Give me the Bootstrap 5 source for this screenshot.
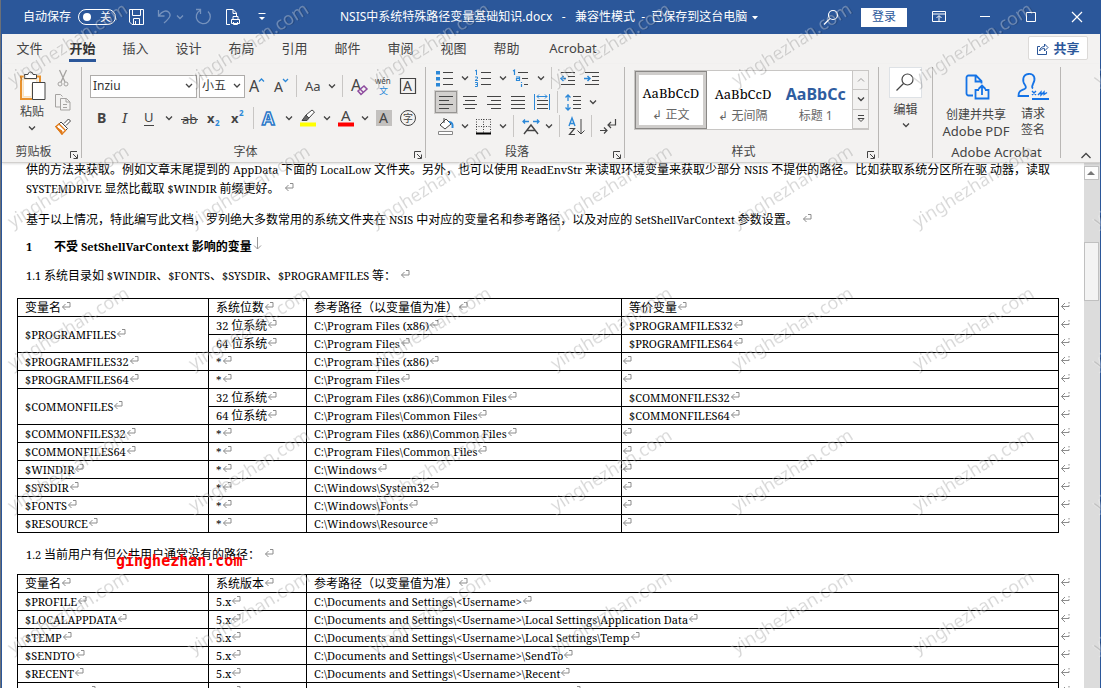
<!DOCTYPE html>
<html lang="zh-CN">
<head>
<meta charset="utf-8">
<meta name="viewport" content="width=device-width, initial-scale=1">
<title>NSIS中系统特殊路径变量基础知识.docx</title>
<link href="https://cdn.jsdelivr.net/npm/bootstrap@5.3.0/dist/css/bootstrap.min.css" rel="stylesheet">
<style>
:root{--word:#2b579a;--ink:#444;--chrome:#f3f2f1}
body{font:12px/16px "Noto Sans","Noto Sans CJK SC",sans-serif;color:var(--ink);background:#6b7078;height:100vh;overflow:hidden;padding-left:1px}
button{background:none;border:0;padding:0;color:inherit;font:inherit}
svg{flex:none;fill:none;stroke:var(--ink);display:block}
.window{height:100%;border-left:1px solid var(--word);border-right:1px solid var(--word);background:#fff}
.titlebar{height:34px;background:var(--word);color:#fff}
.titlebar svg{stroke:#fff}
.quick{width:338px;padding-left:21px}
.quick .dim{opacity:.35}
.quick .save{margin-right:12px}
.switchbox{width:38px;height:16px;border:1px solid #fff;border-radius:8px;margin:0 12px 0 7px;font-size:11px;line-height:14px;padding:0 4px;flex:none}
.dot{width:8px;height:8px;border-radius:50%;background:#fff}
.login{width:46px;height:19px;background:#fff;color:var(--word);margin:0 9px}
.capbtn{width:46px}
.tabs{height:30px;font-size:13px;padding-left:1px}
.tabs .tab{width:53px;color:var(--ink);text-decoration:none;text-align:center;line-height:20px;padding:4px 0 0}
.tabs .tab.wide{width:80px}
.tabs .tab.current span{font-weight:700;border-bottom:3px solid var(--word);display:inline-block;height:24px;color:#333}
.share{width:60px;height:24px;background:#fff;border:1px solid #dcdad8;border-radius:2px;color:var(--word);font-weight:700;margin:2px 12px 0 0}
.share svg{stroke:var(--word)}
.ribbon{height:99px;padding-top:3px;position:relative;border-bottom:1px solid #d2d0ce;box-shadow:0 1px 2px #0002;z-index:1}
.top{background:var(--chrome)}
.group{border-right:1px solid #b9b7b5;height:91px;flex:none}
.tools{height:78px;margin-top:-1px}
.caption{height:16px;line-height:16px;text-align:center;position:relative}
.launch{position:absolute;right:2px;bottom:0}
.rb{height:24px;display:flex;align-items:center;flex:none}
.rb svg text{stroke:none;fill:var(--ink);font-family:"Noto Sans","Noto Sans CJK SC",sans-serif}
.vr1{width:1px;height:22px;background:#c8c6c4;margin:0 4px 0 3px;flex:none}
.pressed{background:#d2d0ce;outline:1px solid #979593;outline-offset:-2px}
.form-select.pick{height:23px;border:1px solid #aeacaa;border-radius:0;padding:0 0 0 2px;font-size:12px;line-height:20px;color:#333;flex:none;background:#fff url("data:image/svg+xml,%3Csvg xmlns='http://www.w3.org/2000/svg' width='8' height='6'%3E%3Cpath d='M1 1l3 3 3-3' fill='none' stroke='%23444' stroke-width='1.3'/%3E%3C/svg%3E") no-repeat right 3px center}
.pick.face{width:107px;margin-right:2px}
.pick.points{width:46px}
.gallery{width:235px;height:60px;border:1px solid #c8c6c4;background:#fff;margin-left:9px}
.style{width:73px;height:58px;white-space:nowrap;color:#666}
.style b{display:block;font:13px/20px "Noto Serif",Cambria,"DejaVu Serif Condensed",serif;color:#000;margin:7px auto 4px}
.style.on{border:1px solid #8a8886;box-shadow:inset 0 0 0 3px #cfcdcb;width:72px}
.style.on b{margin-top:6px}
.style .h1s{font:700 16px/20px "Noto Sans",sans-serif;color:#2f5da0}
.steps{width:16px;border-left:1px solid #c8c6c4;background:var(--chrome)}
.steps button{height:20px;border-bottom:1px solid #c8c6c4;display:flex;align-items:center;justify-content:center}
.big{font-size:13px;text-align:center}
.big svg{stroke:#1473e6}
.page-area{overflow:hidden;color:#000;font:11px/19px "Noto Serif",Cambria,"DejaVu Serif Condensed","Noto Sans CJK SC",serif}
.cj{font-family:"Noto Sans CJK SC",sans-serif;font-size:12px;line-height:12px}
.para{margin:0 24px 13px;white-space:nowrap;font-size:11px;line-height:19px}
.para.first{margin-top:-3px;margin-bottom:12px}
.para.tight{margin-bottom:10px}
.mk{display:inline-block;width:10px;height:10px;vertical-align:1px;stroke:#8c8c8c}
.para .mk{margin-left:4px}
.grid-doc{width:calc(100% - 28px);margin:0 14px 0 15px;border-collapse:collapse;table-layout:fixed;line-height:16px}
.grid-doc th,.grid-doc td{border:1px solid #000;height:18px;padding:1px 0 0 7px;font-weight:400;white-space:nowrap}
.grid-doc td:empty,.grid-doc .void{padding-left:0}
.grid-doc .end{border:0;padding:0 0 0 1px}
.c1{width:191px}.c2{width:98px}.c3{width:315px}.c5{width:13px}
.stamp{position:absolute;left:90px;bottom:-6px;color:red;font:700 15px/18px "DejaVu Sans Mono",monospace}
.scroll{width:16px;background:#dcdcdc;padding-top:3px;flex:none}
.scroll .up{height:14px;width:15px;background:#fdfdfd;border:1px solid #c0c0c0;display:flex;align-items:center;justify-content:center}
.thumb{width:15px;height:59px;margin-top:62px;background:#f3f3f3;border:1px solid #c0c0c0}
.watermark{position:fixed;inset:0;width:100%;height:100%;pointer-events:none;z-index:5}
.watermark text{font:18px "Noto Sans",sans-serif;stroke:none}
</style>
</head>
<body>
<svg width="0" height="0" class="position-absolute" aria-hidden="true">
<symbol id="mk" viewBox="0 0 10 10"><path d="M6 1.500h3v4.500H1.500M4.500 3l-3 3 3 3"/></symbol>
<symbol id="em" viewBox="0 0 10 10"><path d="M9 1v1.500M9 4v1.500H1.500M5 2l-3.500 3.500L5 9"/></symbol>
<symbol id="cv" viewBox="0 0 14 24"><path d="M4 10.500l3 3 3-3" stroke-width="1.300"/></symbol>
<symbol id="la" viewBox="0 0 10 10"><path d="M1.500 8V1.500H8M4 4l4 4M8.500 4.500v4h-4"/></symbol>
</svg>
<div class="window d-flex flex-column">
<header class="top">
<div class="titlebar d-flex align-items-center">
 <div class="quick d-flex align-items-center">
  <span>自动保存</span>
  <button class="switchbox d-flex align-items-center justify-content-between" aria-label="自动保存"><span class="dot"></span><span>关</span></button>
  <button aria-label="保存" class="save"><svg width="17" height="18" viewBox="0 0 17 18"><path d="M1.500 1.500h14v15H4l-2.500-2.500zM4.500 1.500v6h8v-6M5.500 16.500v-6h6v6M7.500 13v3"/></svg></button>
  <button aria-label="撤消" class="dim d-flex align-items-center"><svg width="16" height="18" viewBox="0 0 16 18"><path d="M1.500 2v6h6M2 7.500C5 3 9 2 11.500 4c3 2.500 2 5.500-4.500 11" stroke-width="1.300"/></svg><svg width="14" height="24"><use href="#cv"/></svg></button>
  <button aria-label="重复" class="dim mx-2"><svg width="18" height="18" viewBox="0 0 18 18"><path d="M1 1.500h4.500V6M13 3.500a7 7 0 1 1-8-1" stroke-width="1.300"/></svg></button>
  <button aria-label="打印预览" class="ms-1"><svg width="16" height="18" viewBox="0 0 16 18"><path d="M5 16.500H1.500v-15H8l3.500 3.500v3M8 1.500v4h3.500M6.500 11.500h8v4h-8zM8 11V8.500h5V11M8.500 14v2.500h4V14"/></svg></button>
  <button aria-label="自定义" class="ms-3"><svg width="10" height="10" viewBox="0 0 10 10"><path d="M1.500 1.500h7"/><path d="M2 5h6L5 8z" fill="#fff" stroke="none"/></svg></button>
 </div>
 <div class="text-nowrap">NSIS中系统特殊路径变量基础知识.docx&nbsp; &nbsp;-&nbsp; &nbsp;兼容性模式 &nbsp;-&nbsp; 已保存到这台电脑 <svg class="d-inline-block" width="9" height="8" viewBox="0 0 9 8"><path d="M2 2h6L5 5.500z" fill="#fff" stroke="none"/></svg></div>
 <div class="ms-auto d-flex align-items-center">
  <button aria-label="搜索" class="me-2 pe-1"><svg width="18" height="18" viewBox="0 0 18 18"><circle cx="11" cy="7" r="4.500" stroke-width="1.200"/><path d="M8 10.500l-6 6" stroke-width="1.200"/></svg></button>
  <button class="login">登录</button>
  <button class="capbtn d-flex justify-content-center" aria-label="功能区显示选项"><svg width="14" height="12" viewBox="0 0 14 12"><path d="M.5.500h13v10H.5zM.5 3h13M7 10V5M4.500 7L7 4.500 9.500 7"/></svg></button>
  <button class="capbtn d-flex justify-content-center" aria-label="最小化"><svg width="12" height="12"><path d="M1 5.500h10"/></svg></button>
  <button class="capbtn d-flex justify-content-center" aria-label="最大化"><svg width="12" height="12"><path d="M1.500 1.500h9v9h-9z"/></svg></button>
  <button class="capbtn d-flex justify-content-center" aria-label="关闭"><svg width="12" height="12"><path d="M1 1l10 10M11 1L1 11" stroke-width="1.200"/></svg></button>
 </div>
</div>
<nav class="tabs d-flex">
 <a class="tab" href="#">文件</a><a class="tab current" href="#"><span>开始</span></a><a class="tab" href="#">插入</a><a class="tab" href="#">设计</a><a class="tab" href="#">布局</a><a class="tab" href="#">引用</a><a class="tab" href="#">邮件</a><a class="tab" href="#">审阅</a><a class="tab" href="#">视图</a><a class="tab" href="#">帮助</a><a class="tab wide" href="#">Acrobat</a>
 <button class="share ms-auto d-flex align-items-center justify-content-center gap-1"><svg width="13" height="13" viewBox="0 0 13 13"><path d="M4 4.500H1.500v8h9V9M3.500 9C4 6 6 4.500 8.500 4.500V2L12 5.500 8.500 9V6.500C6.500 6.500 5 7 3.500 9z"/></svg>共享</button>
</nav>
<div class="ribbon d-flex">
 <section class="group" style="width:80px">
  <div class="tools d-flex">
   <button class="ms-3 d-flex flex-column align-items-center align-self-start pt-1" style="width:28px"><svg width="28" height="34" viewBox="0 0 28 34"><path d="M3 6.500h4M17 6.500h5V14M3 5.500V29h11" stroke="#e8912d" stroke-width="2"/><path d="M4.500 8h15v6h-6v13.500h-9z" fill="#fbe3c0" stroke="none"/><path d="M6 10h12v4h-5v12H6z" fill="#fff" stroke="none"/><path d="M6.500 8.500v-4H10a2.500 2.500 0 0 1 5 0h3.500v4z" fill="#fff"/><path d="M14.500 12.500h12.500v17H14.500z" fill="#fff"/></svg><span class="text-nowrap">粘贴</span><svg width="14" height="15" viewBox="0 4 14 15"><use href="#cv" width="14" height="24"/></svg></button>
   <div class="ms-1">
    <button class="rb" aria-label="剪切"><svg width="24" height="24" viewBox="0 0 24 24" style="stroke:#a5a3a1"><path d="M9.500 4l5.500 12M16.500 4L11 16" stroke-width="1.300"/><circle cx="10" cy="18" r="2"/><circle cx="16" cy="18" r="2"/></svg></button>
    <button class="rb" aria-label="复制"><svg width="24" height="24" viewBox="0 0 24 24" style="stroke:#a5a3a1"><path d="M10 17H5.500V4.500h5l2 2M10.500 8.500h6l3.500 3.500v8h-9.500zM16 8.500V12h4M13 14.500h4M13 17.500h4"/></svg></button>
    <button class="rb" aria-label="格式刷"><svg width="24" height="24" viewBox="0 0 24 24"><path d="M14 9.500L18.500 5l2 2L16 11.500M11 8l6.500 6.500-2 2L9 10z" fill="#fff"/><path d="M9 10l6.500 6.500-3.500 3.500-6-7.500z" fill="#fff" stroke="#e07b1a" stroke-width="1.400"/><path d="M5.500 12.500L12 17v3.500z" fill="#e07b1a" stroke="#e07b1a"/></svg></button>
   </div>
  </div>
  <div class="caption pe-3">剪贴板<button class="launch" aria-label="剪贴板选项"><svg width="10" height="10"><use href="#la"/></svg></button></div>
 </section>

 <section class="group" style="width:344px">
  <div class="tools d-flex flex-column gap-2 ps-2 pt-2">
   <div class="d-flex align-items-center">
    <select class="form-select pick face" aria-label="字体"><option>Inziu</option></select>
    <select class="form-select pick points" aria-label="字号"><option>小五</option></select>
    <button class="rb" aria-label="增大字号"><svg width="24" height="24"><text x="4" y="18" font-size="16">A</text><path d="M14 7.500l2.500-2.500L19 7.500" stroke="#2b88d8" stroke-width="1.300"/></svg></button>
    <button class="rb" aria-label="减小字号"><svg width="24" height="24"><text x="5" y="18" font-size="14">A</text><path d="M14 5l2.500 2.500L19 5" stroke="#2b88d8" stroke-width="1.300"/></svg></button>
    <span class="vr1"></span>
    <button class="rb" aria-label="更改大小写"><svg width="24" height="24"><text x="4" y="17" font-size="13">Aa</text></svg><svg width="14" height="24"><use href="#cv"/></svg></button>
    <span class="vr1"></span>
    <button class="rb" aria-label="清除格式"><svg width="24" height="24"><text x="4" y="17" font-size="16">A</text><path d="M11 17l6-5 3 3-6 5.500zM13 15l3.500 3.500" stroke="#8e4b9e" stroke-width="1.500" fill="#f3f2f1"/></svg></button>
    <button class="rb" aria-label="拼音指南"><svg width="24" height="24"><text x="4" y="10" font-size="8">wén</text><text x="8" y="20" font-size="9" style="fill:#2b88d8">文</text></svg></button>
    <button class="rb" aria-label="字符边框"><svg width="24" height="24"><path d="M5.500 4.500h15v15h-15z" stroke-width="1.200"/><text x="8" y="17" font-size="14">A</text></svg></button>
   </div>
   <div class="d-flex align-items-center">
    <button class="rb" aria-label="加粗"><svg width="24" height="24"><text x="7" y="17" font-size="14" font-weight="700">B</text></svg></button>
    <button class="rb" aria-label="倾斜"><svg width="24" height="24"><text x="8" y="17" font-size="14" font-style="italic" style="font-family:'Noto Serif',serif">I</text></svg></button>
    <button class="rb" aria-label="下划线"><svg width="24" height="24"><text x="6" y="16" font-size="13">U</text><path d="M6 19.500h10"/></svg><svg width="14" height="24"><use href="#cv"/></svg></button>
    <button class="rb" aria-label="删除线"><svg width="26" height="24"><text x="6" y="18" font-size="13">ab</text><path d="M5 13.500h17"/></svg></button>
    <button class="rb" aria-label="下标"><svg width="24" height="24"><text x="5" y="17" font-size="13" font-weight="700">x</text><text x="13" y="20" font-size="8" font-weight="700" style="fill:#2b88d8">2</text></svg></button>
    <button class="rb" aria-label="上标"><svg width="24" height="24"><text x="5" y="17" font-size="13" font-weight="700">x</text><text x="13" y="10" font-size="8" font-weight="700" style="fill:#2b88d8">2</text></svg></button>
    <span class="vr1"></span>
    <button class="rb" aria-label="文本效果"><svg width="24" height="24"><text x="4" y="19" font-size="18" font-weight="700" style="fill:#fff;stroke:#2b78c8;stroke-width:1.500">A</text></svg><svg width="14" height="24"><use href="#cv"/></svg></button>
    <button class="rb" aria-label="突出显示"><svg width="24" height="24"><path d="M4 16.500h16v4H4z" fill="#ff0" stroke="none"/><path d="M10 9l6-5 2.500 2-5.500 6z" fill="#fff"/><path d="M10 9l3 3-2 2.500H6z" fill="#666"/></svg><svg width="14" height="24"><use href="#cv"/></svg></button>
    <button class="rb" aria-label="字体颜色"><svg width="24" height="24"><text x="7" y="15" font-size="15">A</text><path d="M4 16.500h16v4H4z" fill="red" stroke="none"/></svg><svg width="14" height="24"><use href="#cv"/></svg></button>
    <button class="rb" aria-label="字符底纹"><svg width="24" height="24"><path d="M4 4h16v16H4z" fill="#c3c1bf" stroke="none"/><text x="7" y="17" font-size="14">A</text></svg></button>
    <button class="rb" aria-label="带圈字符"><svg width="24" height="24"><circle cx="12" cy="12" r="7.500"/><text x="7" y="16" font-size="10">字</text></svg></button>
   </div>
  </div>
  <div class="caption pe-3">字体<button class="launch" aria-label="字体选项"><svg width="10" height="10"><use href="#la"/></svg></button></div>
 </section>

 <section class="group" style="width:199px">
  <div class="tools ps-2">
   <div class="d-flex align-items-center">
    <button class="rb" aria-label="项目符号"><svg width="24" height="24"><path d="M2 5h4v3.500H2zM2 11h4v3.500H2zM2 17h4v3.500H2z" fill="#2b88d8" stroke="none"/><path d="M9 6.500h10M9 12.500h10M9 18.500h10"/></svg><svg width="14" height="24"><use href="#cv"/></svg></button>
    <button class="rb" aria-label="编号"><svg width="24" height="24"><path d="M3 5l1.500-1v5M3 11h2.500v1.500L3 14.500h3M3 16.500h2.500v4H3M3.500 18.500h2" stroke="#2b88d8"/><path d="M9 6.500h10M9 12.500h10M9 18.500h10"/></svg><svg width="14" height="24"><use href="#cv"/></svg></button>
    <button class="rb" aria-label="多级列表"><svg width="24" height="24"><path d="M3 5l1.500-1v5M6 11h3.500v3.500H6.500v-2h3M11.500 16v1M11.500 18v3" stroke="#2b88d8" stroke-width="1.200"/><path d="M8 6.500h10M12 12.500h6M14 18.500h4"/></svg><svg width="14" height="24"><use href="#cv"/></svg></button>
    <span class="vr1"></span>
    <button class="rb" aria-label="减少缩进"><svg width="24" height="24"><path d="M5 6.500h14M12 10.500h7M12 14.500h7M5 18.500h14"/><path d="M10 12.500H5M7.500 10L5 12.500 7.500 15" stroke="#2b88d8" stroke-width="1.500"/></svg></button>
    <button class="rb" aria-label="增加缩进"><svg width="24" height="24"><path d="M5 6.500h14M12 10.500h7M12 14.500h7M5 18.500h14"/><path d="M4 12.500h6M7.500 10l2.500 2.500L7.500 15" stroke="#2b88d8" stroke-width="1.500"/></svg></button>
   </div>
   <div class="d-flex align-items-center">
    <button class="rb pressed" aria-label="左对齐"><svg width="24" height="24"><path d="M5 6.500h14M5 10.500h10M5 14.500h14M5 18.500h10"/></svg></button>
    <button class="rb" aria-label="居中"><svg width="24" height="24"><path d="M5 6.500h14M7 10.500h10M5 14.500h14M7 18.500h10"/></svg></button>
    <button class="rb" aria-label="右对齐"><svg width="24" height="24"><path d="M5 6.500h14M9 10.500h10M5 14.500h14M9 18.500h10"/></svg></button>
    <button class="rb" aria-label="两端对齐"><svg width="24" height="24"><path d="M5 6.500h14M5 10.500h14M5 14.500h14M5 18.500h14"/></svg></button>
    <button class="rb" aria-label="分散对齐"><svg width="24" height="24"><path d="M7 10.500h11M7 14.500h11M7 18.500h11"/><path d="M4.500 4v16M19.500 4v16M7 6.500h10M9 4.500l-2 2 2 2M15 4.500l2 2-2 2" stroke="#2b88d8"/></svg></button>
    <span class="vr1"></span>
    <button class="rb" aria-label="行距"><svg width="24" height="24"><path d="M11 6.500h8M11 10.500h8M11 14.500h8M11 18.500h8"/><path d="M6 5v6M3.500 7.500L6 5l2.500 2.500M6 14v6M3.500 17.500L6 20l2.500-2.500" stroke="#2b88d8" stroke-width="1.300"/></svg><svg width="14" height="24"><use href="#cv"/></svg></button>
   </div>
   <div class="d-flex align-items-center">
    <button class="rb" aria-label="底纹"><svg width="24" height="24"><path d="M6 11l6-6 5 5-6 5zM10 4v5" fill="#fff"/><path d="M15 8c3 0 4 2 3.500 6" stroke="#2b88d8" stroke-width="2"/><path d="M4.500 17.500h14v3h-14z" fill="#fff" stroke="#888"/></svg><svg width="14" height="24"><use href="#cv"/></svg></button>
    <button class="rb" aria-label="边框"><svg width="24" height="24"><path d="M4.500 5v15M18.500 5v15M4 5.500h15M11.500 5v15M4 12.500h15" stroke-dasharray="1 1.500"/><path d="M4 19.500h15" stroke-width="2" stroke="#000"/></svg><svg width="14" height="24"><use href="#cv"/></svg></button>
    <span class="vr1"></span>
    <button class="rb" aria-label="中文版式"><svg width="24" height="24"><path d="M6 20l7-9 7 9M9 16.500h8" stroke-width="1.400"/><path d="M5 7.500h6M7 5.500l-2 2 2 2M15 7.500h6M19 5.500l2 2-2 2" stroke="#2b88d8" stroke-width="1.300"/></svg><svg width="14" height="24"><use href="#cv"/></svg></button>
    <span class="vr1"></span>
    <button class="rb" aria-label="排序"><svg width="24" height="24"><path d="M5 12l3-8 3 8M6 9.500h4" stroke="#2b88d8" stroke-width="1.400"/><path d="M5.500 14.500h5l-5 6h5.500" stroke-width="1.200"/><path d="M17 5v15M13.500 16.500L17 20l3.500-3.500"/></svg></button>
    <span class="vr1"></span>
    <button class="rb" aria-label="显示编辑标记"><svg width="24" height="24"><path d="M19.500 5v6H12M15 8l-3 3 3 3M4 16.500h7M8 13.500l3 3-3 3" stroke-width="1.200"/></svg></button>
   </div>
  </div>
  <div class="caption pe-3">段落<button class="launch" aria-label="段落选项"><svg width="10" height="10"><use href="#la"/></svg></button></div>
 </section>

 <section class="group" style="width:254px">
  <div class="tools pt-1">
   <div class="gallery d-flex">
    <button class="style on"><b>AaBbCcD</b><span>↲ 正文</span></button>
    <button class="style"><b>AaBbCcD</b><span>↲ 无间隔</span></button>
    <button class="style"><b class="h1s">AaBbCc</b><span>标题 1</span></button>
    <div class="steps d-flex flex-column">
     <button aria-label="上一行"><svg width="14" height="18" viewBox="0 3 14 18" opacity=".5"><path d="M4 13.500l3-3 3 3"/></svg></button>
     <button aria-label="下一行"><svg width="14" height="18" viewBox="0 3 14 18"><path d="M4 10.500l3 3 3-3" stroke-width="1.400"/></svg></button>
     <button aria-label="其他样式"><svg width="14" height="18" viewBox="0 3 14 18"><path d="M4 8.500h6M4 11.500l3 3 3-3z"/></svg></button>
    </div>
   </div>
  </div>
  <div class="caption pe-3">样式<button class="launch" aria-label="样式选项"><svg width="10" height="10"><use href="#la"/></svg></button></div>
 </section>

 <section class="group d-flex flex-column align-items-center" style="width:54px">
  <button class="d-flex flex-column align-items-center"><span class="bg-white border p-1"><svg width="23" height="21" viewBox="0 0 23 21"><circle cx="13.500" cy="7.500" r="5.500" stroke-width="1.200"/><path d="M9.500 11.500l-7 7" stroke-width="1.200"/></svg></span><span class="pt-1">编辑</span><svg width="14" height="13" viewBox="0 5 14 13"><use href="#cv" width="14" height="24"/></svg></button>
 </section>

 <section class="group" style="width:128px">
  <div class="tools d-flex big pt-1">
   <button class="d-flex flex-column align-items-center" style="width:86px"><svg width="32" height="32" viewBox="0 0 32 32"><path d="M13 25.500H8.500a2 2 0 0 1-2-2v-16a2 2 0 0 1 2-2H16l5.500 5.500v2.500M15.500 5.500v6h6M19 20h-3.500v8.500h13V20H25M22 25v-9M18.500 19l3.500-3.500 3.500 3.500" stroke-width="1.800"/></svg><span class="text-nowrap pt-1"><span style="font-size:12px">创建并共享</span><br>Adobe PDF</span></button>
   <button class="d-flex flex-column align-items-center" style="width:28px"><svg width="32" height="32" viewBox="0 0 32 32"><path d="M12 26H1.500c0-5 2.500-5.500 6-7 2-1 1.500-2.500.5-4-3-4-2.500-10.500 3.500-11 6-.5 7.500 5 4.500 10-1 2-1.500 3.500 0 4.500M15 29h17" stroke-width="1.800"/><path d="M15 21l4 4M19 21l-4 4M21 25l3-3v3l3-3v2.500l3-2" stroke-width="1.400"/></svg><span class="text-nowrap pt-1" style="font-size:12px">请求<br>签名</span></button>
  </div>
  <div class="caption" style="font-size:13px">Adobe Acrobat</div>
 </section>
 <button class="ms-auto align-self-end me-2" aria-label="折叠功能区"><svg width="12" height="12" viewBox="0 0 12 12"><path d="M1.500 8L6 3.500 10.500 8" stroke-width="1.300"/></svg></button>
</div>
</header>

<div class="d-flex flex-grow-1 overflow-hidden">
<main class="page-area flex-grow-1">
 <p class="para first"><span class="cj">供的方法来获取。例如文章末尾提到的</span> AppData <span class="cj">下面的</span> LocalLow <span class="cj">文件夹。另外，也可以使用</span> ReadEnvStr <span class="cj">来读取环境变量来获取少部分</span> NSIS <span class="cj">不提供的路径。比如获取系统分区所在驱 动器，读取</span><br>SYSTEMDRIVE <span class="cj">显然比截取</span> $WINDIR <span class="cj">前缀更好。</span><svg class="mk"><use href="#mk"/></svg></p>
 <p class="para mb-2"><span class="cj">基于以上情况，特此编写此文档，罗列绝大多数常用的系统文件夹在</span> NSIS <span class="cj">中对应的变量名和参考路径，以及对应的</span> SetShellVarContext <span class="cj">参数设置。</span><svg class="mk"><use href="#mk"/></svg></p>
 <h1 class="para tight d-flex fw-bold"><span style="width:28px">1</span><span><span class="cj">不受</span> SetShellVarContext <span class="cj">影响的变量</span></span><svg width="10" height="14" viewBox="0 0 10 14" style="stroke:#999"><path d="M5.500 0v12M2 8.500l3.500 3.500L9 8.500"/></svg></h1>
 <p class="para">1.1 <span class="cj">系统目录如</span> $WINDIR<span class="cj">、</span>$FONTS<span class="cj">、</span>$SYSDIR<span class="cj">、</span>$PROGRAMFILES <span class="cj">等：</span><svg class="mk"><use href="#mk"/></svg></p>

 <table class="grid-doc">
  <colgroup><col class="c1"><col class="c2"><col class="c3"><col><col class="c5"></colgroup>
  <thead><tr><th><span class="cj">变量名</span></th><th><span class="cj">系统位数</span></th><th><span class="cj">参考路径（以变量值为准）</span></th><th><span class="cj">等价变量</span></th></tr></thead>
  <tbody>
  <tr><td rowspan="2">$PROGRAMFILES</td><td>32 <span class="cj">位系统</span></td><td>C:\Program Files (x86)</td><td>$PROGRAMFILES32</td></tr>
  <tr><td>64 <span class="cj">位系统</span></td><td>C:\Program Files</td><td>$PROGRAMFILES64</td></tr>
  <tr><td>$PROGRAMFILES32</td><td>*</td><td>C:\Program Files (x86)</td><td class="void"></td></tr>
  <tr><td>$PROGRAMFILES64</td><td>*</td><td>C:\Program Files</td><td class="void"></td></tr>
  <tr><td rowspan="2">$COMMONFILES</td><td>32 <span class="cj">位系统</span></td><td>C:\Program Files (x86)\Common Files</td><td>$COMMONFILES32</td></tr>
  <tr><td>64 <span class="cj">位系统</span></td><td>C:\Program Files\Common Files</td><td>$COMMONFILES64</td></tr>
  <tr><td>$COMMONFILES32</td><td>*</td><td>C:\Program Files (x86)\Common Files</td><td class="void"></td></tr>
  <tr><td>$COMMONFILES64</td><td>*</td><td>C:\Program Files\Common Files</td><td class="void"></td></tr>
  <tr><td>$WINDIR</td><td>*</td><td>C:\Windows</td><td class="void"></td></tr>
  <tr><td>$SYSDIR</td><td>*</td><td>C:\Windows\System32</td><td class="void"></td></tr>
  <tr><td>$FONTS</td><td>*</td><td>C:\Windows\Fonts</td><td class="void"></td></tr>
  <tr><td>$RESOURCE</td><td>*</td><td>C:\Windows\Resource</td><td class="void"></td></tr>
  </tbody>
 </table>

 <p class="para tight position-relative pt-2 mt-1">1.2 <span class="cj">当前用户有但公共用户通常没有的路径：</span><svg class="mk"><use href="#mk"/></svg><span class="stamp">ginghezhan.com</span></p>

 <table class="grid-doc">
  <colgroup><col class="c1"><col class="c2"><col><col class="c5"></colgroup>
  <thead><tr><th><span class="cj">变量名</span></th><th><span class="cj">系统版本</span></th><th><span class="cj">参考路径（以变量值为准）</span></th></tr></thead>
  <tbody>
  <tr><td>$PROFILE</td><td>5.x</td><td>C:\Documents and Settings\&lt;Username&gt;</td></tr>
  <tr><td>$LOCALAPPDATA</td><td>5.x</td><td>C:\Documents and Settings\&lt;Username&gt;\Local Settings\Application Data</td></tr>
  <tr><td>$TEMP</td><td>5.x</td><td>C:\Documents and Settings\&lt;Username&gt;\Local Settings\Temp</td></tr>
  <tr><td>$SENDTO</td><td>5.x</td><td>C:\Documents and Settings\&lt;Username&gt;\SendTo</td></tr>
  <tr><td>$RECENT</td><td>5.x</td><td>C:\Documents and Settings\&lt;Username&gt;\Recent</td></tr>
  <tr><td>$NETHOOD</td><td>5.x</td><td>C:\Documents and Settings\&lt;Username&gt;\NetHood</td></tr>
  </tbody>
 </table>
</main>
<aside class="scroll"><button class="up" aria-label="向上滚动"><svg width="9" height="6"><path d="M0 5h8L4 1z" fill="#777" stroke="none"/></svg></button><div class="thumb"></div></aside>
</div>
</div>
<svg class="watermark" aria-hidden="true"><defs><pattern id="wm" width="181" height="142" patternUnits="userSpaceOnUse"><g transform="translate(11 86) rotate(-32)"><text x="1" y="1" fill="#000" fill-opacity=".16">yinghezhan.com</text><text fill="#fff" fill-opacity=".3">yinghezhan.com</text></g></pattern></defs><rect width="100%" height="100%" fill="url(#wm)" stroke="none"/></svg>
<script src="https://cdn.jsdelivr.net/npm/bootstrap@5.3.0/dist/js/bootstrap.bundle.min.js"></script>
<script>
// Formatting marks: one at the end of every cell, one after every row.
const mark = id => `<svg class="mk"><use href="#${id}"/></svg>`;
document.querySelectorAll('.grid-doc th, .grid-doc td').forEach(c => c.insertAdjacentHTML('beforeend', mark('mk')));
document.querySelectorAll('.grid-doc tr').forEach(r => r.insertAdjacentHTML('beforeend', `<td class="end">${mark('em')}</td>`));
</script>
</body>
</html>
